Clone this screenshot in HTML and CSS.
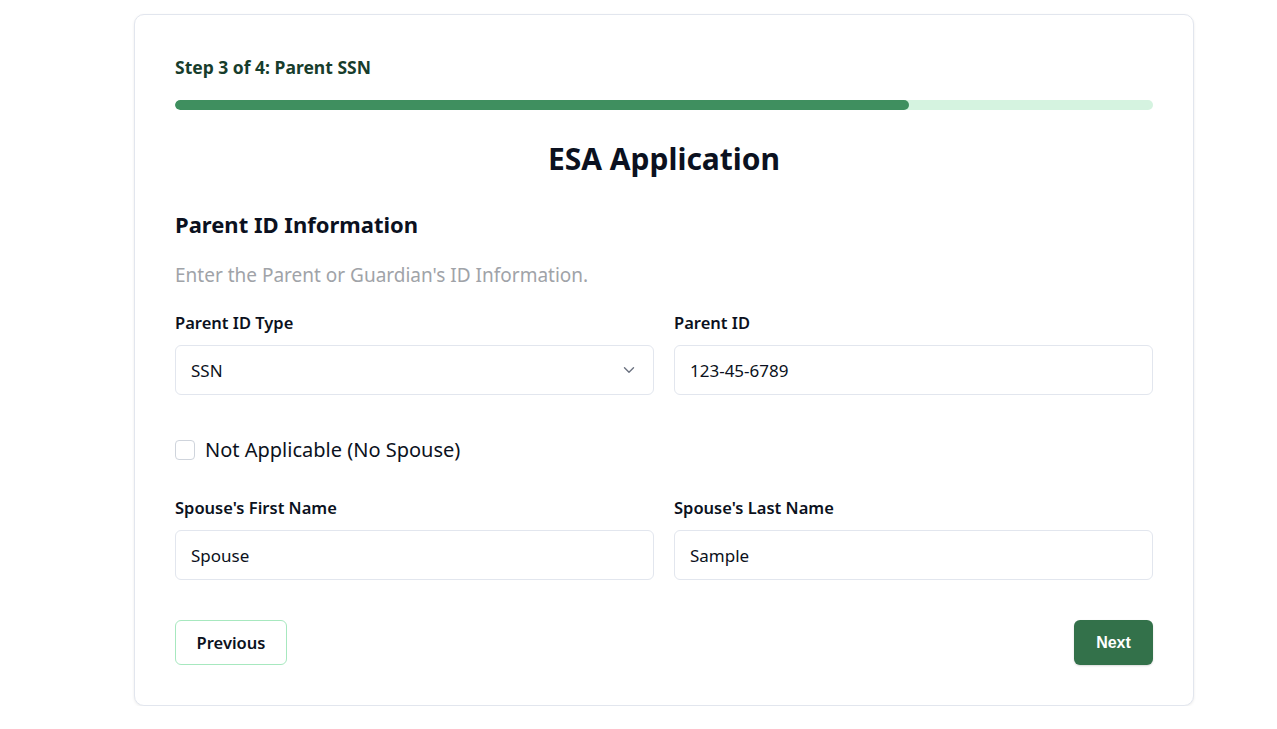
FILE: index.html
```html
<!DOCTYPE html>
<html lang="en">
<head>
  <meta charset="UTF-8">
  <title>ESA Application</title>
  <link rel="stylesheet" href="styles.css">
</head>
<body>
  <div class="page">
    <div class="card">
      <div class="step-label">Step 3 of 4: Parent SSN</div>
      <div class="progress">
        <div class="progress-fill" style="width: 75%"></div>
      </div>

      <h1 class="title">ESA Application</h1>
      <h2 class="section-title">Parent ID Information</h2>
      <p class="hint">Enter the Parent or Guardian's ID Information.</p>

      <div class="row">
        <div class="field">
          <label class="field-label">Parent ID Type</label>
          <div class="select">
            <span>SSN</span>
            <svg class="chevron" width="12" height="8" viewBox="0 0 12 8">
              <path d="M1.5 1.8 L6 6.2 L10.5 1.8" fill="none" stroke="#6b7280" stroke-width="1.4" stroke-linecap="round" stroke-linejoin="round"/>
            </svg>
          </div>
        </div>
        <div class="field">
          <label class="field-label">Parent ID</label>
          <div class="input">123-45-6789</div>
        </div>
      </div>

      <label class="check-row">
        <span class="checkbox"></span>
        <span>Not Applicable (No Spouse)</span>
      </label>

      <div class="row">
        <div class="field">
          <label class="field-label">Spouse's First Name</label>
          <div class="input">Spouse</div>
        </div>
        <div class="field">
          <label class="field-label">Spouse's Last Name</label>
          <div class="input">Sample</div>
        </div>
      </div>

      <div class="actions">
        <button class="btn btn-prev">Previous</button>
        <button class="btn btn-next">Next</button>
      </div>
    </div>
  </div>
</body>
</html>
```

FILE: styles.css
```css
body {
  margin: 0;
  background: #fff;
  font-family: "Noto Sans", "Open Sans", sans-serif;
  color: #0b1120;
}

.page {
  padding: 14px 0 0 134px;
}

.card {
  width: 978px;
  padding: 40px;
  border: 1px solid #e2e6ee;
  border-radius: 10px;
  box-shadow: 0 1px 3px rgba(0, 0, 0, 0.08);
  background: #fff;
}

.step-label {
  font-size: 17.5px;
  line-height: 24px;
  font-weight: 700;
  color: #173d2c;
}

.progress {
  margin-top: 21px;
  height: 10px;
  border-radius: 5px;
  background: #d5f3e0;
  overflow: hidden;
}

.progress-fill {
  height: 100%;
  background: #3f8f5f;
  border-radius: 5px;
}

.title {
  margin: 31px 0 0;
  text-align: center;
  font-size: 30px;
  line-height: 36px;
  font-weight: 700;
}

.section-title {
  margin: 33px 0 0;
  font-size: 22px;
  line-height: 28px;
  font-weight: 700;
}

.hint {
  margin: 23px 0 0;
  font-size: 19px;
  line-height: 28px;
  color: #a0a3a8;
}

.row {
  display: grid;
  grid-template-columns: 1fr 1fr;
  gap: 20px;
  margin-top: 22px;
}

.field-label {
  display: block;
  font-size: 16.5px;
  line-height: 24px;
  font-weight: 600;
  margin-bottom: 10px;
}

.input,
.select {
  height: 48px;
  border: 1px solid #e2e6ee;
  border-radius: 6px;
  padding: 0 15px;
  display: flex;
  align-items: center;
  font-size: 17px;
  color: #0b1120;
}

.select {
  justify-content: space-between;
  padding-right: 18px;
}

.check-row {
  display: flex;
  align-items: center;
  gap: 10px;
  margin-top: 41px;
  font-size: 20px;
  line-height: 28px;
}

.check-row + .row {
  margin-top: 32px;
}

.checkbox {
  width: 18px;
  height: 18px;
  border: 1px solid #cfd4dc;
  border-radius: 4px;
}

.actions {
  display: flex;
  justify-content: space-between;
  margin-top: 40px;
}

.btn {
  height: 45px;
  border-radius: 6px;
  font-size: 16px;
  font-weight: 700;
  cursor: pointer;
}

.btn-prev {
  width: 112px;
  background: #fff;
  border: 1px solid #a7e8bf;
  color: #0b1120;
  font-family: "Noto Sans", "Open Sans", sans-serif;
  font-size: 16.5px;
  font-weight: 600;
}

.btn-next {
  width: 79px;
  background: #33714a;
  border: none;
  color: #fff;
  font-family: "Liberation Sans", Arial, sans-serif;
  box-shadow: 0 1px 2px rgba(0, 0, 0, 0.15);
}
```
